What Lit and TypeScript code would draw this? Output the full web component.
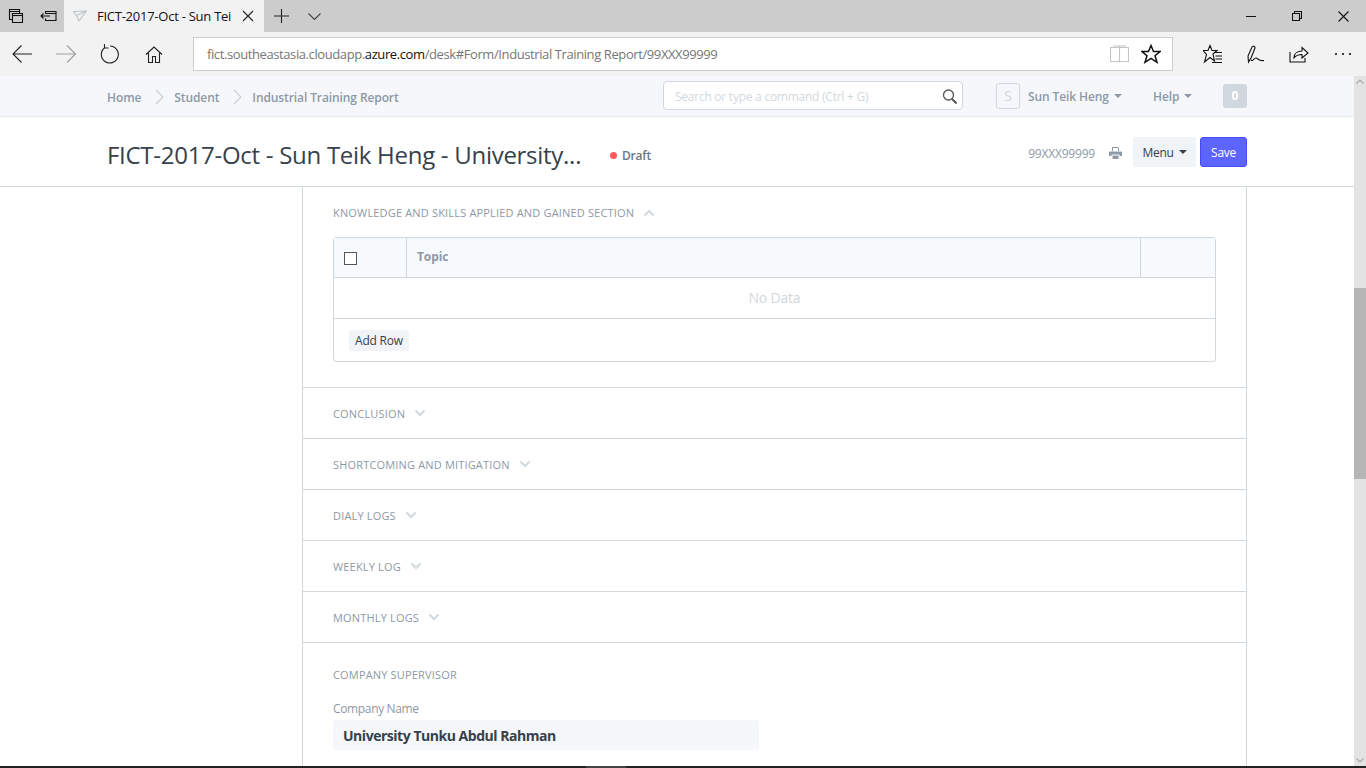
import { LitElement, html, css, svg } from 'lit';
import { customElement } from 'lit/decorators.js';

const stroke = (body: unknown, w = 20, h = 20, color = '#111') => html`
  <svg width=${w} height=${h} viewBox="0 0 ${w} ${h}" fill="none" stroke=${color} stroke-width="1.1">${body}</svg>
`;

const chevron = (up: boolean) => html`
  <svg class="fold" width="12" height="8" viewBox="0 0 12 8" fill="none" stroke="#d1d8dd" stroke-width="2">
    <path d=${up ? 'M1.5 6.5 6 2l4.5 4.5' : 'M1.5 1.5 6 6l4.5-4.5'} />
  </svg>
`;

const sections = ['CONCLUSION', 'SHORTCOMING AND MITIGATION', 'DIALY LOGS', 'WEEKLY LOG', 'MONTHLY LOGS'];

@customElement('app-root')
export class AppRoot extends LitElement {
  static styles = css`
    :host {
      display: flex;
      flex-direction: column;
      height: 768px;
      overflow: hidden;
      font-family: "Open Sans", "Noto Sans", sans-serif;
      font-size: 12px;
      color: #36414c;
      background: #fff;
    }

    svg { display: block; flex: none; }

    /* browser chrome */
    .tabbar {
      display: flex;
      height: 32px;
      flex: none;
      background: #ccc;
    }
    .tb {
      display: flex;
      align-items: center;
      justify-content: center;
      width: 32px;
      flex: none;
    }
    .tb.plus { width: 34px; }
    .tab {
      display: flex;
      align-items: center;
      width: 200px;
      background: #f2f2f2;
      flex: none;
    }
    .tab .fav { margin-left: 9px; }
    .tab .title {
      margin-left: 10px;
      width: 136px;
      overflow: hidden;
      white-space: nowrap;
      font-size: 13px;
      letter-spacing: -0.25px;
      color: #111;
    }
    .tab .close { margin-left: 9px; }
    .spacer { flex: 1; }
    .win {
      display: flex;
      align-items: center;
      justify-content: center;
      width: 46px;
    }

    .toolbar {
      display: flex;
      align-items: center;
      height: 44px;
      flex: none;
      background: #f2f2f2;
    }
    .nav {
      display: flex;
      align-items: center;
      justify-content: center;
      width: 44px;
      height: 44px;
      flex: none;
    }
    .nav.narrow { width: 42px; }
    .address {
      display: flex;
      align-items: center;
      box-sizing: border-box;
      width: 980px;
      height: 34px;
      margin: 0 18px 0 17px;
      padding: 0 11px 0 13px;
      background: #fff;
      border: 1px solid #ccc;
      flex: none;
    }
    .url {
      flex: 1;
      font-size: 13px;
      letter-spacing: -0.4px;
      color: #767676;
      white-space: nowrap;
    }
    .url b { font-weight: 400; color: #111; }
    .address svg + svg { margin-left: 12px; }

    /* page */
    .viewport {
      display: flex;
      flex: 1;
      min-height: 0;
    }
    .page {
      flex: 1;
      min-width: 0;
      overflow: hidden;
    }
    .container {
      width: 1140px;
      margin: 0 auto;
      display: flex;
      align-items: center;
    }

    .navbar {
      height: 40px;
      background: #f5f7fa;
      border-bottom: 1px solid #e7ebee;
    }
    .navbar .container { height: 40px; }
    .crumbs {
      display: flex;
      align-items: center;
      margin-top: 2px;
      font-weight: 600;
      color: #8d99a6;
      letter-spacing: -0.1px;
      width: 556px;
      flex: none;
    }
    .crumbs svg { margin: 0 10px 0 14px; }
    .search {
      display: flex;
      align-items: center;
      justify-content: space-between;
      box-sizing: border-box;
      width: 300px;
      height: 29px;
      margin-bottom: 1px;
      padding: 2px 5px 0 11px;
      background: #fff;
      border: 1px solid #d1d8dd;
      border-radius: 4px;
      color: #d1d8dd;
      letter-spacing: -0.25px;
      flex: none;
    }
    .avatar {
      box-sizing: border-box;
      width: 24px;
      height: 26px;
      margin-left: 33px;
      border: 1px solid #d1d8dd;
      border-radius: 3px;
      color: #d1d8dd;
      font-size: 14px;
      line-height: 24px;
      text-align: center;
      flex: none;
    }
    .menu-link {
      display: flex;
      align-items: center;
      font-weight: 600;
      color: #8d99a6;
      letter-spacing: -0.1px;
      flex: none;
    }
    .user { margin-left: 8px; width: 125px; }
    .help { width: 70px; }
    .caret {
      width: 0;
      height: 0;
      margin-left: 5px;
      border-left: 4px solid transparent;
      border-right: 4px solid transparent;
      border-top: 4px solid #8d99a6;
    }
    .badge {
      width: 24px;
      height: 24px;
      border-radius: 3px;
      background: #d1d8dd;
      color: #fff;
      font-weight: 700;
      line-height: 24px;
      text-align: center;
      flex: none;
    }

    .head {
      height: 69px;
      border-bottom: 1px solid #d1d8dd;
    }
    .head .container { height: 70px; }
    h1 {
      margin: 6px 0 0;
      font-size: 24px;
      font-weight: 400;
      letter-spacing: -0.28px;
      white-space: nowrap;
      width: 503px;
      flex: none;
      line-height: 64px;
    }
    .status {
      display: flex;
      align-items: center;
      margin-top: 6px;
      font-weight: 600;
      color: #6c7680;
      letter-spacing: -0.2px;
    }
    .dot {
      width: 7px;
      height: 7px;
      margin-right: 5px;
      border-radius: 50%;
      background: #ff5858;
    }
    .doc-name {
      margin-top: 2px;
      color: #8d99a6;
      letter-spacing: -0.2px;
      margin-right: 14px;
    }
    .printer { margin-top: 2px; }
    .btn {
      box-sizing: border-box;
      height: 30px;
      border-radius: 3px;
      display: flex;
      align-items: center;
      justify-content: center;
      letter-spacing: -0.3px;
    }
    .btn.menu {
      width: 63px;
      margin-left: 11px;
      background: #f0f4f7;
      color: #36414c;
    }
    .btn.menu .caret { border-top-color: #36414c; }
    .btn.save {
      width: 47px;
      margin-left: 4px;
      background: #5e64ff;
      border: 1px solid #444bff;
      color: #fff;
    }

    /* form */
    .form {
      box-sizing: border-box;
      width: 945px;
      min-height: 700px;
      margin-left: 195px;
      border-left: 1px solid #d1d8dd;
      border-right: 1px solid #d1d8dd;
    }
    .wrap {
      width: 1140px;
      margin: 0 auto;
    }
    .section {
      padding: 0 30px;
      border-bottom: 1px solid #d1d8dd;
    }
    .section.closed {
      display: flex;
      align-items: center;
      height: 50px;
    }
    .section.open { height: 201px; box-sizing: border-box; padding-top: 18px; }
    .label {
      font-size: 11px;
      color: #8d99a6;
      letter-spacing: 0.17px;
      white-space: nowrap;
    }
    .fold { margin-left: 9px; }
    .open-title {
      display: flex;
      align-items: center;
      height: 15px;
    }
    .grid {
      box-sizing: border-box;
      width: 883px;
      height: 125px;
      margin-top: 17px;
      border: 1px solid #d1d8dd;
      border-radius: 3px;
    }
    .grid-head {
      display: flex;
      height: 40px;
      box-sizing: border-box;
      background: #f7fafc;
      border-bottom: 1px solid #d1d8dd;
    }
    .cell-check {
      display: flex;
      align-items: center;
      box-sizing: border-box;
      width: 73px;
      padding-left: 10px;
      border-right: 1px solid #d1d8dd;
    }
    .check {
      box-sizing: border-box;
      width: 13px;
      height: 13px;
      margin-top: 1px;
      border: 1px solid #555;
      background: #fff;
    }
    .cell-topic {
      flex: 1;
      padding: 10px;
      font-weight: 700;
      color: #8d99a6;
      letter-spacing: -0.1px;
    }
    .cell-end {
      width: 74px;
      border-left: 1px solid #d1d8dd;
    }
    .grid-empty {
      box-sizing: border-box;
      height: 41px;
      border-bottom: 1px solid #d1d8dd;
      color: #d1d8dd;
      font-size: 14px;
      letter-spacing: -0.2px;
      line-height: 40px;
      text-align: center;
    }
    .grid-foot {
      padding: 11px 15px;
    }
    .add {
      width: 60px;
      height: 21px;
      border-radius: 3px;
      background: #f0f4f7;
      color: #36414c;
      letter-spacing: -0.2px;
      line-height: 21px;
      text-align: center;
    }
    .company { padding: 24px 30px 0; }
    .company .label { line-height: 15px; }
    .field-label {
      margin-top: 19px;
      color: #8d99a6;
      letter-spacing: -0.35px;
      line-height: 16px;
    }
    .value {
      box-sizing: border-box;
      width: 426px;
      height: 30px;
      margin-top: 3px;
      padding-left: 10px;
      background: #f5f7fa;
      border-radius: 3px;
      color: #36414c;
      font-size: 14px;
      font-weight: 700;
      letter-spacing: -0.47px;
      line-height: 32px;
    }

    /* scrollbar and bottom edge */
    .scrollbar {
      display: flex;
      flex-direction: column;
      align-items: center;
      width: 12px;
      flex: none;
      background: #e3e3e3;
    }
    .thumb {
      width: 12px;
      height: 191px;
      margin-top: 204px;
      background: #b5b5b5;
      flex: none;
    }
    .scrollbar .up { margin-top: 3px; }
    .scrollbar .down { margin-top: auto; margin-bottom: 3px; }
    .taskbar {
      display: flex;
      height: 2px;
      flex: none;
      background: #222;
    }
    .taskbar i {
      width: 40px;
      margin-left: 586px;
      background: #444;
    }
  `;

  render() {
    return html`
      <div class="tabbar">
        <div class="tb">${stroke(svg`<path d="M3.5 3.5h10v10h-10zM3.5 5.5h10"/><path d="M6.5 7.5h10v9h-10z" fill="#ccc"/><path d="M6.5 9.5h10"/>`)}</div>
        <div class="tb">${stroke(svg`<path d="M7.5 7.5V5.5h10.5v9H7.5v-2M7.5 7.5h10.5M3 10h9M5.5 7.5 3 10l2.500 2.500"/>`)}</div>
        <div class="tab">
          <div class="fav">${stroke(svg`<path d="M.5 2.5 13.5 2 6 12 3.5 6.5zM3.5 6.5 13.5 2"/>`, 14, 14, '#bcc4c8')}</div>
          <div class="title">FICT-2017-Oct - Sun Tei</div>
          <div class="close">${stroke(svg`<path d="M1 1l10 10M11 1 1 11"/>`, 12, 12, '#222')}</div>
        </div>
        <div class="tb plus">${stroke(svg`<path d="M7.5 0v14M0 7h15"/>`, 15, 14, '#222')}</div>
        <div class="tb">${stroke(svg`<path d="M.5 .5 6.5 6.5 12.5 .5"/>`, 13, 7, '#444')}</div>
        <div class="spacer"></div>
        <div class="win">${stroke(svg`<path d="M0 .5h10"/>`, 10, 1, '#111')}</div>
        <div class="win">${stroke(svg`<path d="M.5 2.5h7v7h-7zM2.5 2.5v-2h7v7h-2"/>`, 10, 10, '#111')}</div>
        <div class="win">${stroke(svg`<path d="M.5 .5l10 10M10.5 .5l-10 10"/>`, 11, 11, '#111')}</div>
      </div>

      <div class="toolbar">
        <div class="nav">${stroke(svg`<path d="M1 10h19M9.5 1.5 1 10l8.5 8.5"/>`, 21, 20, '#222')}</div>
        <div class="nav">${stroke(svg`<path d="M0 10h19.5M11 1.5l8.5 8.5-8.5 8.5"/>`, 21, 20, '#a0a0a0')}</div>
        <div class="nav">${stroke(svg`<path d="M5 3.5a8.5 8.5 0 1 0 5-1.5M4.5 0v4h4"/>`, 20, 20, '#222')}</div>
        <div class="nav">${stroke(svg`<path d="M1 9.5 9 2l8 7.5M3.5 8v9.5h4V11.5h3v6h4V8"/>`, 18, 19, '#222')}</div>
        <div class="address">
          <div class="url">fict.southeastasia.cloudapp.<b>azure.com</b>/desk#Form/Industrial Training Report/99XXX99999</div>
          ${stroke(svg`<path d="M.5 2.5h9v14h-9zM9.5 2.5h9v14h-9z"/><path d="M3 1h6.5v1M16 1H9.5" />`, 19, 18, '#c4c4c4')}
          ${stroke(svg`<path d="M10 1.5l2.5 6h6.5l-5 4.2 2 6.600-6-3.900-6 3.900 2-6.600-5-4.200h6.500z" stroke-width="1.5"/>`, 20, 20, '#111')}
        </div>
        <div class="nav">${stroke(svg`<path d="M7 1.5 9 6.5h5L10 10l1.5 7L7 13.5 1.5 18l2-7.5L0 6.5h5z"/><path d="M11 8.5h8M12.5 12h6.5M12.5 15h6.5M9 18.5h10"/>`, 20, 20, '#111')}</div>
        <div class="nav narrow">${stroke(svg`<path d="M1.5 17 1 11 5 2c1-1.500 3.500-.5 3 1L4 13zM4 15c2 2 3-2.500 5-2s3 3.500 8 2.500"/>`, 18, 19, '#111')}</div>
        <div class="nav">${stroke(svg`<path d="M1 7v10h15v-4M5 13c0-5 4-7 8-7V2.500l6 5.500-6 5V9.500c-3 0-6 1-8 3.500z" />`, 20, 18, '#111')}</div>
        <div class="nav">
          <svg width="18" height="4" viewBox="0 0 18 4" fill="#111"><circle cx="2" cy="2" r="1.1"/><circle cx="9" cy="2" r="1.1"/><circle cx="16" cy="2" r="1.1"/></svg>
        </div>
      </div>

      <div class="viewport">
        <div class="page">
          <div class="navbar">
            <div class="container">
              <div class="crumbs">
                Home
                ${stroke(svg`<path d="M1 1l7 7-7 7"/>`, 9, 16, '#c8ced3')}
                Student
                ${stroke(svg`<path d="M1 1l7 7-7 7"/>`, 9, 16, '#c8ced3')}
                Industrial Training Report
              </div>
              <div class="search">
                Search or type a command (Ctrl + G)
                ${stroke(svg`<circle cx="6.5" cy="6" r="5" stroke-width="1.3"/><path d="M10 10l4.500 4.500" stroke-width="2"/>`, 15, 15, '#555')}
              </div>
              <div class="avatar">S</div>
              <div class="menu-link user">Sun Teik Heng<span class="caret"></span></div>
              <div class="menu-link help">Help<span class="caret"></span></div>
              <div class="badge">0</div>
            </div>
          </div>

          <div class="head">
            <div class="container">
              <h1>FICT-2017-Oct - Sun Teik Heng - University...</h1>
              <div class="status"><span class="dot"></span>Draft</div>
              <div class="spacer"></div>
              <div class="doc-name">99XXX99999</div>
              <svg class="printer" width="13" height="12" viewBox="0 0 13 12" fill="#8d99a6"><path d="M3 0h6l1 1v3H9V1H4v3H3zM1 4.5h11a1 1 0 0 1 1 1V9h-2.500V7.500h-8V9H0V5.500a1 1 0 0 1 1-1zM3.500 8.500h6V12h-6z"/></svg>
              <div class="btn menu">Menu<span class="caret"></span></div>
              <div class="btn save">Save</div>
            </div>
          </div>

          <div class="wrap">
            <div class="form">
              <div class="section open">
                <div class="open-title">
                  <span class="label">KNOWLEDGE AND SKILLS APPLIED AND GAINED SECTION</span>
                  ${chevron(true)}
                </div>
                <div class="grid">
                  <div class="grid-head">
                    <div class="cell-check"><div class="check"></div></div>
                    <div class="cell-topic">Topic</div>
                    <div class="cell-end"></div>
                  </div>
                  <div class="grid-empty">No Data</div>
                  <div class="grid-foot"><div class="add">Add Row</div></div>
                </div>
              </div>
              ${sections.map(
                (name) => html`
                  <div class="section closed">
                    <span class="label">${name}</span>
                    ${chevron(false)}
                  </div>
                `,
              )}
              <div class="company">
                <div class="label">COMPANY SUPERVISOR</div>
                <div class="field-label">Company Name</div>
                <div class="value">University Tunku Abdul Rahman</div>
              </div>
            </div>
          </div>
        </div>

        <div class="scrollbar">
          <svg class="up" width="8" height="5" viewBox="0 0 8 5" fill="none" stroke="#aaa" stroke-width="1.2"><path d="M.5 4.5 4 1l3.5 3.5"/></svg>
          <div class="thumb"></div>
          <svg class="down" width="8" height="5" viewBox="0 0 8 5" fill="none" stroke="#aaa" stroke-width="1.2"><path d="M.5 .5 4 4l3.5-3.5"/></svg>
        </div>
      </div>
      <div class="taskbar"><i></i></div>
    `;
  }
}
